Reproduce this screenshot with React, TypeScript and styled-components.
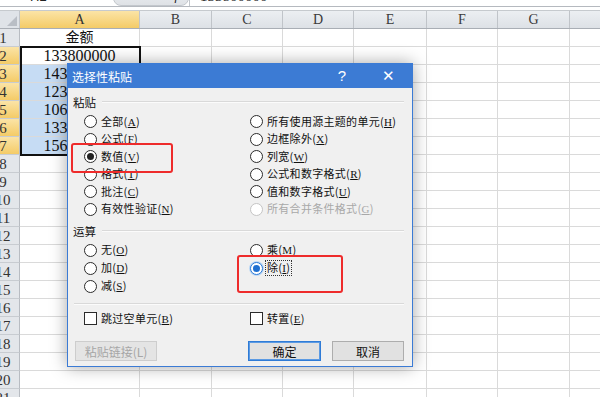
import React from 'react';
import styled, { createGlobalStyle, css } from 'styled-components';

const GlobalStyle = createGlobalStyle`
  html, body {
    margin: 0;
    padding: 0;
    background: #fff;
  }
  body {
    width: 600px;
    height: 397px;
    overflow: hidden;
    font-family: "Liberation Serif", "Noto Sans CJK SC", serif;
  }
`;

const COLS = [
  { key: 'A', width: 120 },
  { key: 'B', width: 72 },
  { key: 'C', width: 71 },
  { key: 'D', width: 71 },
  { key: 'E', width: 73 },
  { key: 'F', width: 71 },
  { key: 'G', width: 72 },
  { key: 'H', width: 80 },
];

const VALUES: Record<number, string> = {
  1: '金额',
  2: '133800000',
  3: '143200000',
  4: '123500000',
  5: '106000000',
  6: '133000000',
  7: '156000000',
};

const ROWS = Array.from({ length: 21 }, (_, i) => i + 1);

const Page = styled.div`
  position: relative;
  width: 600px;
  height: 397px;
  overflow: hidden;
  background: #fff;
`;

/* formula bar, only its bottom edge shows */
const FormulaBar = styled.div`
  height: 6px;
  overflow: hidden;
  border-bottom: 1px solid #b5b9bf;
`;

const FormulaInner = styled.div`
  display: flex;
  align-items: center;
  height: 20px;
  margin-top: -14px;
  font-size: 15px;
  color: #222;
`;

const NameBox = styled.div`
  width: 100px;
  padding-left: 30px;
  box-sizing: border-box;
  font-family: "Liberation Sans", sans-serif;
  font-size: 13px;
`;

const Grip = styled.div`
  width: 76px;
  height: 20px;
  margin-left: 13px;
  border-radius: 0 0 8px 8px;
  background: linear-gradient(#eef0f3, #dfe2e6);
  border: 1px solid #c3c7cc;
  box-sizing: border-box;
  display: flex;
  justify-content: flex-end;
  align-items: center;
  padding-right: 4px;
  font-style: italic;
  font-size: 13px;
`;

const FormulaValue = styled.div`
  flex: 1;
  height: 20px;
  line-height: 20px;
  border-left: 1px solid #c3c7cc;
  padding-left: 10px;
`;

const Gap = styled.div`
  height: 3px;
  background: #fff;
`;

const Sheet = styled.div`
  display: flex;
  flex-direction: column;
`;

const HeaderRow = styled.div`
  display: flex;
  height: 19px;
  border-top: 1px solid #c6cace;
  border-bottom: 1px solid #a9aeb5;
  box-sizing: border-box;
`;

const Corner = styled.div`
  position: relative;
  flex: 0 0 20px;
  background: #dfe3e8;
  border-right: 1px solid #c0c4c9;
  box-sizing: border-box;
  &::after {
    content: '';
    position: absolute;
    right: 2px;
    bottom: 2px;
    border-left: 10px solid transparent;
    border-bottom: 10px solid #b9bec5;
  }
`;

const activeHead = css`
  background: linear-gradient(#fbe4a6, #f4cb67);
  color: #333;
`;

const ColHead = styled.div<{ $width: number; $active?: boolean }>`
  flex: 0 0 ${(p) => p.$width}px;
  box-sizing: border-box;
  border-right: 1px solid #c0c4c9;
  background: linear-gradient(#eceff2, #dde1e6);
  color: #3a3a3a;
  font-size: 14px;
  line-height: 17px;
  text-align: center;
  ${(p) => p.$active && activeHead}
`;

const Body = styled.div`
  position: relative;
  display: flex;
  flex-direction: column;
`;

const Row = styled.div`
  display: flex;
  height: 18px;
`;

const RowHead = styled.div<{ $active?: boolean }>`
  flex: 0 0 20px;
  box-sizing: border-box;
  overflow: hidden;
  background: #e3e6ea;
  border-right: 1px solid #b8bcc2;
  border-bottom: 1px solid #c8ccd1;
  color: #333;
  font-size: 15px;
  line-height: 18px;
  ${(p) => p.$active && activeHead}
`;

/* the header column is scrolled a little, so wide numbers are cut at the left */
const RowNum = styled.div`
  width: 30px;
  margin-left: -12px;
  text-align: center;
`;

const Cell = styled.div<{ $width: number; $selected?: boolean; $cjk?: boolean }>`
  flex: 0 0 ${(p) => p.$width}px;
  box-sizing: border-box;
  border-right: 1px solid #dadada;
  border-bottom: 1px solid #dadada;
  background: ${(p) => (p.$selected ? '#c6dcf4' : '#fff')};
  color: #111;
  font-size: ${(p) => (p.$cjk ? 14 : 16)}px;
  line-height: 17px;
  text-align: center;
  white-space: nowrap;
  overflow: hidden;
`;

const Selection = styled.div`
  position: absolute;
  left: 20px;
  top: 17px;
  width: 121px;
  height: 110px;
  border: 2px solid #111;
  box-sizing: border-box;
  pointer-events: none;
`;

/* dialog */

const Dialog = styled.div`
  position: absolute;
  left: 67px;
  top: 63px;
  width: 346px;
  height: 304px;
  box-sizing: border-box;
  border: 1px solid #3b7bd5;
  background: #f0f0f0;
  box-shadow: 0 0 16px rgba(0, 0, 0, 0.35);
  font-family: "Noto Sans CJK SC", "Liberation Sans", sans-serif;
  font-size: 11px;
  color: #111;
  display: flex;
  flex-direction: column;
`;

const TitleBar = styled.div`
  display: flex;
  align-items: center;
  height: 24px;
  flex: none;
  background: #3c7bd4;
  color: #fff;
  font-size: 12px;
  padding-left: 4px;
`;

const TitleButton = styled.div<{ $width: number }>`
  width: ${(p) => p.$width}px;
  text-align: center;
  font-family: "Liberation Sans", sans-serif;
  font-size: 15px;
  line-height: 24px;
`;

const TitleButtons = styled.div`
  margin-left: auto;
  display: flex;
  gap: 8px;
  padding-right: 1px;
`;

const DialogBody = styled.div`
  flex: 1;
  display: flex;
  flex-direction: column;
  padding: 6px 8px 0 5px;
`;

const SectionHead = styled.div<{ $top?: number }>`
  display: flex;
  align-items: center;
  gap: 6px;
  height: 16px;
  margin-top: ${(p) => p.$top ?? 0}px;
  font-size: 11.5px;
  &::after {
    content: '';
    flex: 1;
    border-top: 1px solid #d9d9d9;
    border-bottom: 1px solid #fbfbfb;
  }
`;

const OptionGrid = styled.div<{ $rows: number; $rowHeight: number; $top: number }>`
  display: grid;
  grid-template-columns: 166px 1fr;
  grid-template-rows: repeat(${(p) => p.$rows}, ${(p) => p.$rowHeight}px);
  grid-auto-flow: column;
  padding-left: 11px;
  margin-top: ${(p) => p.$top}px;
`;

const Option = styled.div<{ $disabled?: boolean }>`
  display: flex;
  align-items: center;
  gap: 3px;
  white-space: nowrap;
  letter-spacing: 0.3px;
  color: ${(p) => (p.$disabled ? '#a8a8a8' : '#111')};
`;

const Radio = styled.span<{ $checked?: boolean; $disabled?: boolean; $focus?: boolean }>`
  flex: none;
  width: 13px;
  height: 13px;
  box-sizing: border-box;
  border-radius: 50%;
  background: #fff;
  border: 1px solid ${(p) => (p.$disabled ? '#c4c4c4' : p.$focus ? '#2a78d6' : '#2b2b2b')};
  box-shadow: ${(p) => (p.$focus ? '0 0 0 1px #bcd8f5' : 'none')};
  display: flex;
  align-items: center;
  justify-content: center;
  &::after {
    content: '';
    display: ${(p) => (p.$checked ? 'block' : 'none')};
    width: 7px;
    height: 7px;
    border-radius: 50%;
    background: ${(p) => (p.$focus ? '#1f6fd0' : '#222')};
  }
`;

const Check = styled.span`
  flex: none;
  width: 13px;
  height: 13px;
  box-sizing: border-box;
  background: #fff;
  border: 1px solid #2b2b2b;
`;

const Label = styled.span<{ $focus?: boolean }>`
  padding: 0 1px;
  outline: ${(p) => (p.$focus ? '1px dotted #333' : 'none')};
  line-height: 13px;
`;

const Key = styled.span`
  text-decoration: underline;
  font-family: "Liberation Serif", serif;
`;

const Divider = styled.div`
  margin-top: 8px;
  border-top: 1px solid #d9d9d9;
  border-bottom: 1px solid #fbfbfb;
  margin-left: 1px;
`;

const ButtonRow = styled.div`
  display: flex;
  gap: 11px;
  margin-top: 14px;
  padding-left: 2px;
`;

const Button = styled.div<{ $width: number; $primary?: boolean; $disabled?: boolean }>`
  width: ${(p) => p.$width}px;
  height: 20px;
  box-sizing: border-box;
  display: flex;
  align-items: center;
  justify-content: center;
  font-size: 12px;
  background: ${(p) => (p.$disabled ? '#e4e4e4' : '#e1e1e1')};
  color: ${(p) => (p.$disabled ? '#a6a6a6' : '#111')};
  border: 1px solid ${(p) => (p.$primary ? '#2f7bd6' : p.$disabled ? '#cdcdcd' : '#adadad')};
  box-shadow: ${(p) => (p.$primary ? 'inset 0 0 0 1px #5b9ae3' : 'none')};
`;

const Spacer = styled.div`
  flex: 1;
`;

const Mark = styled.div<{ $x: number; $y: number; $w: number; $h: number }>`
  position: absolute;
  left: ${(p) => p.$x}px;
  top: ${(p) => p.$y}px;
  width: ${(p) => p.$w}px;
  height: ${(p) => p.$h}px;
  box-sizing: border-box;
  border: 2px solid #ee2b2b;
  border-radius: 3px;
  pointer-events: none;
`;

type Opt = { text: string; k: string; checked?: boolean; disabled?: boolean; focus?: boolean };

const PASTE: Opt[] = [
  { text: '全部', k: 'A' },
  { text: '公式', k: 'F' },
  { text: '数值', k: 'V', checked: true },
  { text: '格式', k: 'T' },
  { text: '批注', k: 'C' },
  { text: '有效性验证', k: 'N' },
  { text: '所有使用源主题的单元', k: 'H' },
  { text: '边框除外', k: 'X' },
  { text: '列宽', k: 'W' },
  { text: '公式和数字格式', k: 'R' },
  { text: '值和数字格式', k: 'U' },
  { text: '所有合并条件格式', k: 'G', disabled: true },
];

const OPS: Opt[] = [
  { text: '无', k: 'O' },
  { text: '加', k: 'D' },
  { text: '减', k: 'S' },
  { text: '乘', k: 'M' },
  { text: '除', k: 'I', checked: true, focus: true },
];

const RadioOption = ({ o }: { o: Opt }) => (
  <Option $disabled={o.disabled}>
    <Radio $checked={o.checked} $disabled={o.disabled} $focus={o.focus} />
    <Label $focus={o.focus}>
      {o.text}(<Key>{o.k}</Key>)
    </Label>
  </Option>
);

const Spreadsheet = () => (
  <Sheet>
    <HeaderRow>
      <Corner />
      {COLS.map((c) => (
        <ColHead key={c.key} $width={c.width} $active={c.key === 'A'}>
          {c.key}
        </ColHead>
      ))}
    </HeaderRow>
    <Body>
      {ROWS.map((r) => (
        <Row key={r}>
          <RowHead $active={r >= 2 && r <= 7}>
            <RowNum>{r}</RowNum>
          </RowHead>
          {COLS.map((c) => (
            <Cell
              key={c.key}
              $width={c.width}
              $selected={c.key === 'A' && r >= 3 && r <= 7}
              $cjk={r === 1}
            >
              {c.key === 'A' ? VALUES[r] : ''}
            </Cell>
          ))}
        </Row>
      ))}
      <Selection />
    </Body>
  </Sheet>
);

const PasteSpecial = () => (
  <Dialog>
    <TitleBar>
      选择性粘贴
      <TitleButtons>
        <TitleButton $width={30}>?</TitleButton>
        <TitleButton $width={46}>✕</TitleButton>
      </TitleButtons>
    </TitleBar>
    <DialogBody>
      <SectionHead>粘贴</SectionHead>
      <OptionGrid $rows={6} $rowHeight={17.5} $top={3}>
        {PASTE.map((o) => (
          <RadioOption key={o.k} o={o} />
        ))}
      </OptionGrid>
      <SectionHead $top={5}>运算</SectionHead>
      <OptionGrid $rows={3} $rowHeight={18} $top={2}>
        {OPS.map((o) => (
          <RadioOption key={o.k} o={o} />
        ))}
      </OptionGrid>
      <Divider />
      <OptionGrid $rows={1} $rowHeight={17} $top={5}>
        <Option>
          <Check />
          <Label>
            跳过空单元(<Key>B</Key>)
          </Label>
        </Option>
        <Option>
          <Check />
          <Label>
            转置(<Key>E</Key>)
          </Label>
        </Option>
      </OptionGrid>
      <ButtonRow>
        <Button $width={82} $disabled>
          粘贴链接(L)
        </Button>
        <Spacer />
        <Button $width={73} $primary>
          确定
        </Button>
        <Button $width={72}>取消</Button>
      </ButtonRow>
    </DialogBody>
  </Dialog>
);

export default function App() {
  return (
    <Page>
      <GlobalStyle />
      <FormulaBar>
        <FormulaInner>
          <NameBox>H2</NameBox>
          <Grip>fx</Grip>
          <FormulaValue>133800000</FormulaValue>
        </FormulaInner>
      </FormulaBar>
      <Gap />
      <Spreadsheet />
      <PasteSpecial />
      <Mark $x={71} $y={143} $w={102} $h={30} />
      <Mark $x={237} $y={255} $w={106} $h={38} />
    </Page>
  );
}
